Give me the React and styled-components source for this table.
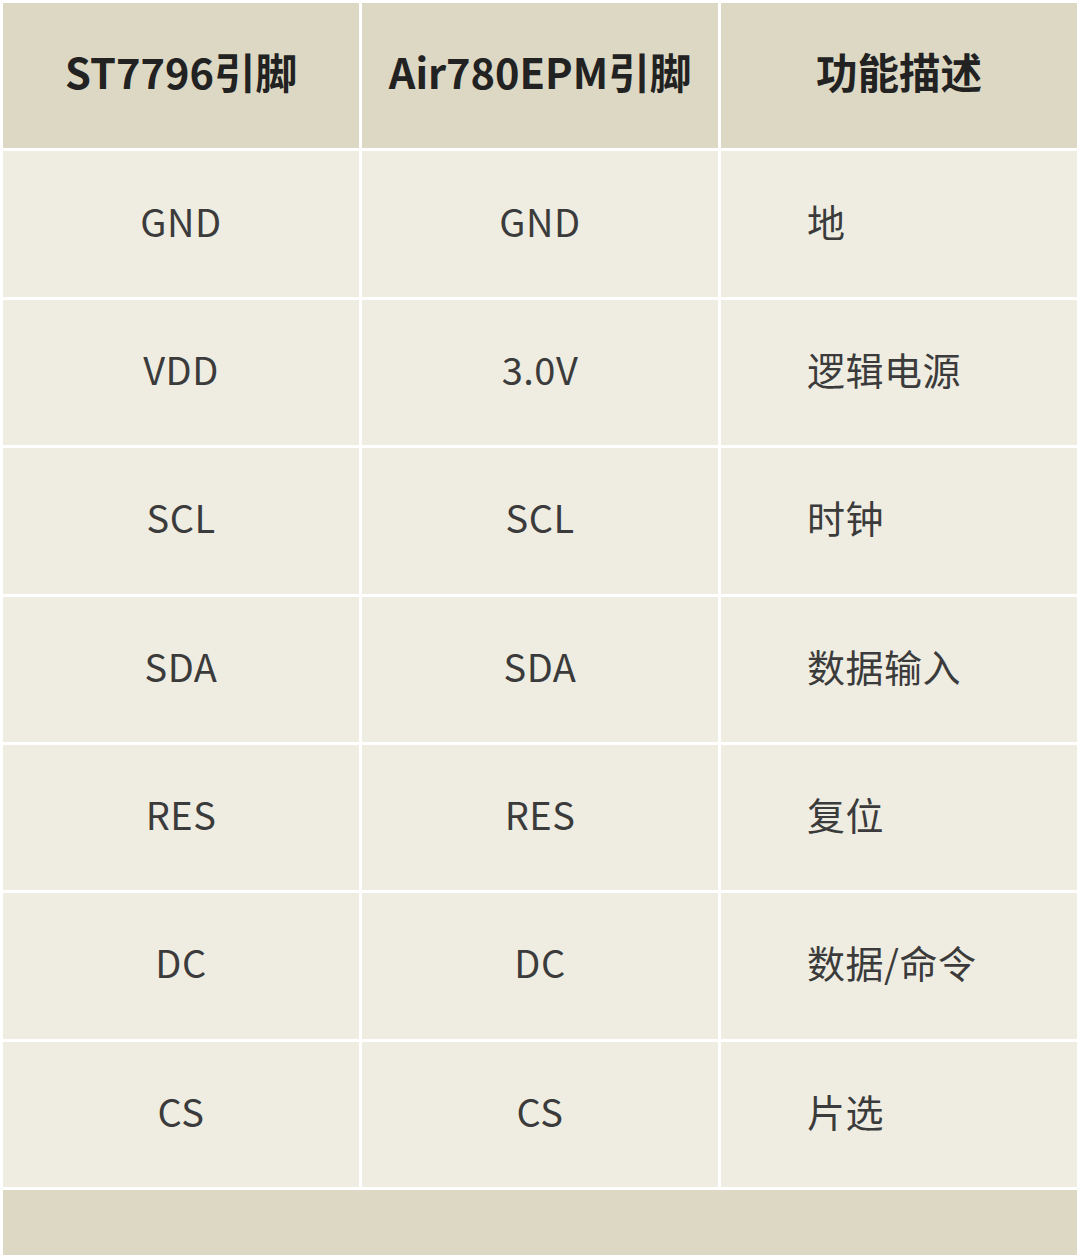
import React from "react";
import styled, { createGlobalStyle } from "styled-components";

const Global = createGlobalStyle`
  html, body { margin: 0; padding: 0; background: #ffffff; }
  body { font-family: "Noto Sans CJK SC", "Noto Sans", sans-serif; }
`;

const Table = styled.div`
  width: 1080px;
  height: 1258px;
  box-sizing: border-box;
  padding: 3px;
  display: grid;
  grid-template-columns: repeat(3, 1fr);
  grid-template-rows: repeat(8, 145.375px) 65px;
  gap: 3px;
  background: #ffffff;
`;

const HeadCell = styled.div`
  background: #ddd8c3;
  color: #222222;
  font-size: 41.5px;
  font-weight: 700;
  display: flex;
  align-items: center;
  justify-content: center;
  padding-bottom: 10px;
  box-sizing: border-box;
`;

const Cell = styled.div`
  background: #efede2;
  color: #3b3b3b;
  font-size: 38px;
  font-weight: 400;
  letter-spacing: 0.5px;
  display: flex;
  align-items: center;
  justify-content: ${(p) => (p.$left ? "flex-start" : "center")};
  padding-left: ${(p) => (p.$left ? "86px" : "0")};
  padding-bottom: 8px;
  box-sizing: border-box;
`;

const Footer = styled.div`
  grid-column: 1 / -1;
  background: #ddd8c3;
`;

const rows = [
  ["GND", "GND", "地"],
  ["VDD", "3.0V", "逻辑电源"],
  ["SCL", "SCL", "时钟"],
  ["SDA", "SDA", "数据输入"],
  ["RES", "RES", "复位"],
  ["DC", "DC", "数据/命令"],
  ["CS", "CS", "片选"],
];

export default function App() {
  return (
    <>
      <Global />
      <Table>
        <HeadCell>ST7796引脚</HeadCell>
        <HeadCell>Air780EPM引脚</HeadCell>
        <HeadCell>功能描述</HeadCell>
        {rows.map((r, i) => (
          <React.Fragment key={i}>
            <Cell>{r[0]}</Cell>
            <Cell>{r[1]}</Cell>
            <Cell $left>{r[2]}</Cell>
          </React.Fragment>
        ))}
        <Footer />
      </Table>
    </>
  );
}
